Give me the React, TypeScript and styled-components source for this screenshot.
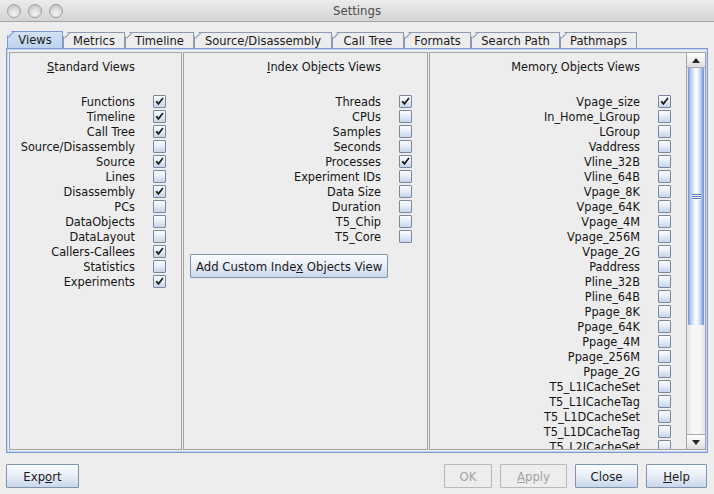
import React from 'react';
import styled, { createGlobalStyle } from 'styled-components';

const GlobalStyle = createGlobalStyle`
  html, body {
    margin: 0;
    padding: 0;
    background: #ededed;
  }
  body {
    font-family: "DejaVu Sans Condensed", "DejaVu Sans", sans-serif;
    font-size: 12.6px;
    color: #151515;
  }
`;

const Window = styled.div`
  width: 714px;
  height: 494px;
  display: flex;
  flex-direction: column;
  background: #ededed;
  overflow: hidden;
`;

const TitleBar = styled.div`
  height: 21px;
  border-bottom: 1px solid #a6a6a6;
  background: linear-gradient(#ececec, #d3d3d3);
  display: grid;
  grid-template-columns: 1fr auto 1fr;
  align-items: center;
`;

const Lights = styled.div`
  display: flex;
  gap: 7px;
  padding-left: 7px;
`;

const Light = styled.span`
  width: 14px;
  height: 14px;
  box-sizing: border-box;
  border-radius: 50%;
  border: 1px solid #a0a0a0;
  background: radial-gradient(circle at 50% 75%, #f4f4f4 0, #dcdcdc 45%, #bababa 100%);
`;

const Title = styled.div`
  font-size: 13px;
  color: #4a4a4a;
`;

const TabBar = styled.div`
  display: flex;
  align-items: flex-end;
  height: 17px;
  margin: 9px 0 0 7px;
`;

const Tab = styled.div<{ $w: number; $active?: boolean }>`
  position: relative;
  width: ${p => p.$w}px;
  height: ${p => (p.$active ? 17 : 16)}px;
  box-sizing: border-box;
  border: 1px solid ${p => (p.$active ? '#7b99d2' : '#8d9ab0')};
  border-bottom: none;
  background: ${p => (p.$active ? 'linear-gradient(#d3e2f5, #bcd2ee)' : '#ededed')};
  clip-path: polygon(5px 0, 100% 0, 100% 100%, 0 100%, 0 5px);
  text-align: center;
  line-height: ${p => (p.$active ? 16 : 15)}px;
  font-size: 12.8px;
  color: #1a1a1a;
  white-space: nowrap;
  &::before {
    content: '';
    position: absolute;
    left: 0;
    top: 0;
    width: 8px;
    height: 1px;
    background: ${p => (p.$active ? '#7b99d2' : '#8d9ab0')};
    transform-origin: 0 0;
    transform: translate(0px, 5px) rotate(-45deg);
  }
`;

const Panel = styled.div`
  flex: 1;
  min-height: 0;
  margin: 0 6px;
  border: 1px solid #7c9bd6;
  box-shadow: inset 0 0 0 1px #c4d6f1;
  padding: 3px 1px 2px 2px;
  display: grid;
  grid-template-columns: 173px 245px 1fr;
  gap: 1px;
`;

const Column = styled.div`
  border: 1px solid #a4a4a4;
  display: flex;
  flex-direction: column;
  min-height: 0;
  overflow: hidden;
`;

const ScrollColumn = styled(Column)`
  flex-direction: row;
`;

const List = styled.div`
  flex: 1;
  min-width: 0;
  display: flex;
  flex-direction: column;
  overflow: hidden;
`;

const Rows = styled.div`
  display: grid;
  grid-template-columns: auto 13px;
  grid-template-rows: 35px;
  grid-auto-rows: 15px;
  column-gap: 18px;
  justify-content: end;
  align-items: center;
  padding: 6px 15px 0 0;
`;

const Heading = styled.div`
  grid-column: 1;
  align-self: start;
  line-height: 15px;
  text-align: right;
  white-space: nowrap;
`;

const Label = styled.div`
  text-align: right;
  white-space: nowrap;
  line-height: 15px;
`;

const Box = styled.span`
  width: 13px;
  height: 13px;
  box-sizing: border-box;
  border: 1px solid #7b889c;
  border-radius: 1px;
  background: linear-gradient(#fbfcfe, #e6eef8 45%, #c6d5ea);
  display: flex;
  align-items: center;
  justify-content: center;
`;

const PushButton = styled.button<{ $w?: number; $disabled?: boolean }>`
  height: 24px;
  ${p => (p.$w ? `width: ${p.$w}px;` : '')}
  box-sizing: border-box;
  padding: 0 5px;
  font-family: inherit;
  font-size: 13px;
  color: ${p => (p.$disabled ? '#a3a3a3' : '#1a1a1a')};
  border: 1px solid ${p => (p.$disabled ? '#b9b9b9' : '#8093ae')};
  border-radius: 1px;
  background: ${p =>
    p.$disabled ? '#ededed' : 'linear-gradient(#fafcfe, #e8eef7 50%, #c8d7eb)'};
  white-space: nowrap;
`;

const AddButton = styled(PushButton)`
  align-self: flex-start;
  margin: 10px 0 0 6px;
`;

const ScrollBar = styled.div`
  width: 18px;
  border-left: 1px solid #a4a4a4;
  display: flex;
  flex-direction: column;
  background: linear-gradient(to right, #e4e4e4, #f7f7f7 30%, #f7f7f7 70%, #e4e4e4);
`;

const Arrow = styled.div<{ $down?: boolean }>`
  height: 15px;
  box-sizing: border-box;
  background: linear-gradient(#ffffff, #dedede);
  ${p => (p.$down ? 'border-top: 1px solid #a8a8a8; margin-top: auto;' : 'border-bottom: 1px solid #a8a8a8;')}
  display: flex;
  align-items: center;
  justify-content: center;
  &::after {
    content: '';
    border-left: 4px solid transparent;
    border-right: 4px solid transparent;
    ${p => (p.$down ? 'border-top: 5px solid #262626;' : 'border-bottom: 5px solid #262626;')}
  }
`;

const Thumb = styled.div`
  height: 257px;
  flex-shrink: 0;
  margin: 0 1px;
  border-radius: 1px;
  background: linear-gradient(
    to right,
    #6a8bd1 0,
    #a9c0ea 12%,
    #e2ebf9 35%,
    #ffffff 50%,
    #dae5f7 70%,
    #99b3e4 88%,
    #6a8bd1 100%
  );
  display: flex;
  flex-direction: column;
  align-items: center;
  justify-content: center;
  gap: 1px;
`;

const Grip = styled.span`
  width: 9px;
  height: 1px;
  background: #5373b8;
  box-shadow: 0 1px 0 #ffffff;
`;

const Footer = styled.div`
  display: flex;
  gap: 8px;
  padding: 11px 7px 6px 6px;
`;

const Spacer = styled.div`
  flex: 1;
`;

const Check = () => (
  <svg width="9" height="9" viewBox="0 0 9 9">
    <path d="M0.4 4.8 L2.2 3.8 L3.3 5.6 L7.4 0.4 L8.6 1.4 L3.5 8.2 Z" fill="#1c1c1c" />
  </svg>
);

type Item = [string, boolean];

const standardViews: Item[] = [
  ['Functions', true],
  ['Timeline', true],
  ['Call Tree', true],
  ['Source/Disassembly', false],
  ['Source', true],
  ['Lines', false],
  ['Disassembly', true],
  ['PCs', false],
  ['DataObjects', false],
  ['DataLayout', false],
  ['Callers-Callees', true],
  ['Statistics', false],
  ['Experiments', true],
];

const indexViews: Item[] = [
  ['Threads', true],
  ['CPUs', false],
  ['Samples', false],
  ['Seconds', false],
  ['Processes', true],
  ['Experiment IDs', false],
  ['Data Size', false],
  ['Duration', false],
  ['T5_Chip', false],
  ['T5_Core', false],
];

const memoryViews: Item[] = [
  ['Vpage_size', true],
  ...[
    'In_Home_LGroup',
    'LGroup',
    'Vaddress',
    'Vline_32B',
    'Vline_64B',
    'Vpage_8K',
    'Vpage_64K',
    'Vpage_4M',
    'Vpage_256M',
    'Vpage_2G',
    'Paddress',
    'Pline_32B',
    'Pline_64B',
    'Ppage_8K',
    'Ppage_64K',
    'Ppage_4M',
    'Ppage_256M',
    'Ppage_2G',
    'T5_L1ICacheSet',
    'T5_L1ICacheTag',
    'T5_L1DCacheSet',
    'T5_L1DCacheTag',
    'T5_L2ICacheSet',
  ].map(n => [n, false] as Item),
];

const tabs: [string, number][] = [
  ['Views', 56],
  ['Metrics', 62],
  ['Timeline', 69],
  ['Source/Disassembly', 138],
  ['Call Tree', 72],
  ['Formats', 67],
  ['Search Path', 89],
  ['Pathmaps', 77],
];

const CheckRows = ({ title, items }: { title: React.ReactNode; items: Item[] }) => (
  <Rows>
    <Heading>{title}</Heading>
    <span />
    {items.map(([name, on]) => (
      <React.Fragment key={name}>
        <Label>{name}</Label>
        <Box>{on && <Check />}</Box>
      </React.Fragment>
    ))}
  </Rows>
);

export default function App() {
  return (
    <Window>
      <GlobalStyle />
      <TitleBar>
        <Lights>
          <Light />
          <Light />
          <Light />
        </Lights>
        <Title>Settings</Title>
        <div />
      </TitleBar>

      <TabBar>
        {tabs.map(([name, w], i) => (
          <Tab key={name} $w={w} $active={i === 0}>
            {name}
          </Tab>
        ))}
      </TabBar>

      <Panel>
        <Column>
          <CheckRows
            title={
              <>
                <u>S</u>tandard Views
              </>
            }
            items={standardViews}
          />
        </Column>
        <Column>
          <CheckRows
            title={
              <>
                <u>I</u>ndex Objects Views
              </>
            }
            items={indexViews}
          />
          <AddButton>
            Add Custom Inde<u>x</u> Objects View
          </AddButton>
        </Column>
        <ScrollColumn>
          <List>
            <CheckRows
              title={
                <>
                  Memor<u>y</u> Objects Views
                </>
              }
              items={memoryViews}
            />
          </List>
          <ScrollBar>
            <Arrow />
            <Thumb>
              <Grip />
              <Grip />
              <Grip />
            </Thumb>
            <Arrow $down />
          </ScrollBar>
        </ScrollColumn>
      </Panel>

      <Footer>
        <PushButton $w={73}>
          Exp<u>o</u>rt
        </PushButton>
        <Spacer />
        <PushButton $w={48} $disabled>
          OK
        </PushButton>
        <PushButton $w={67} $disabled>
          <u>A</u>pply
        </PushButton>
        <PushButton $w={63}>Close</PushButton>
        <PushButton $w={61}>
          <u>H</u>elp
        </PushButton>
      </Footer>
    </Window>
  );
}
